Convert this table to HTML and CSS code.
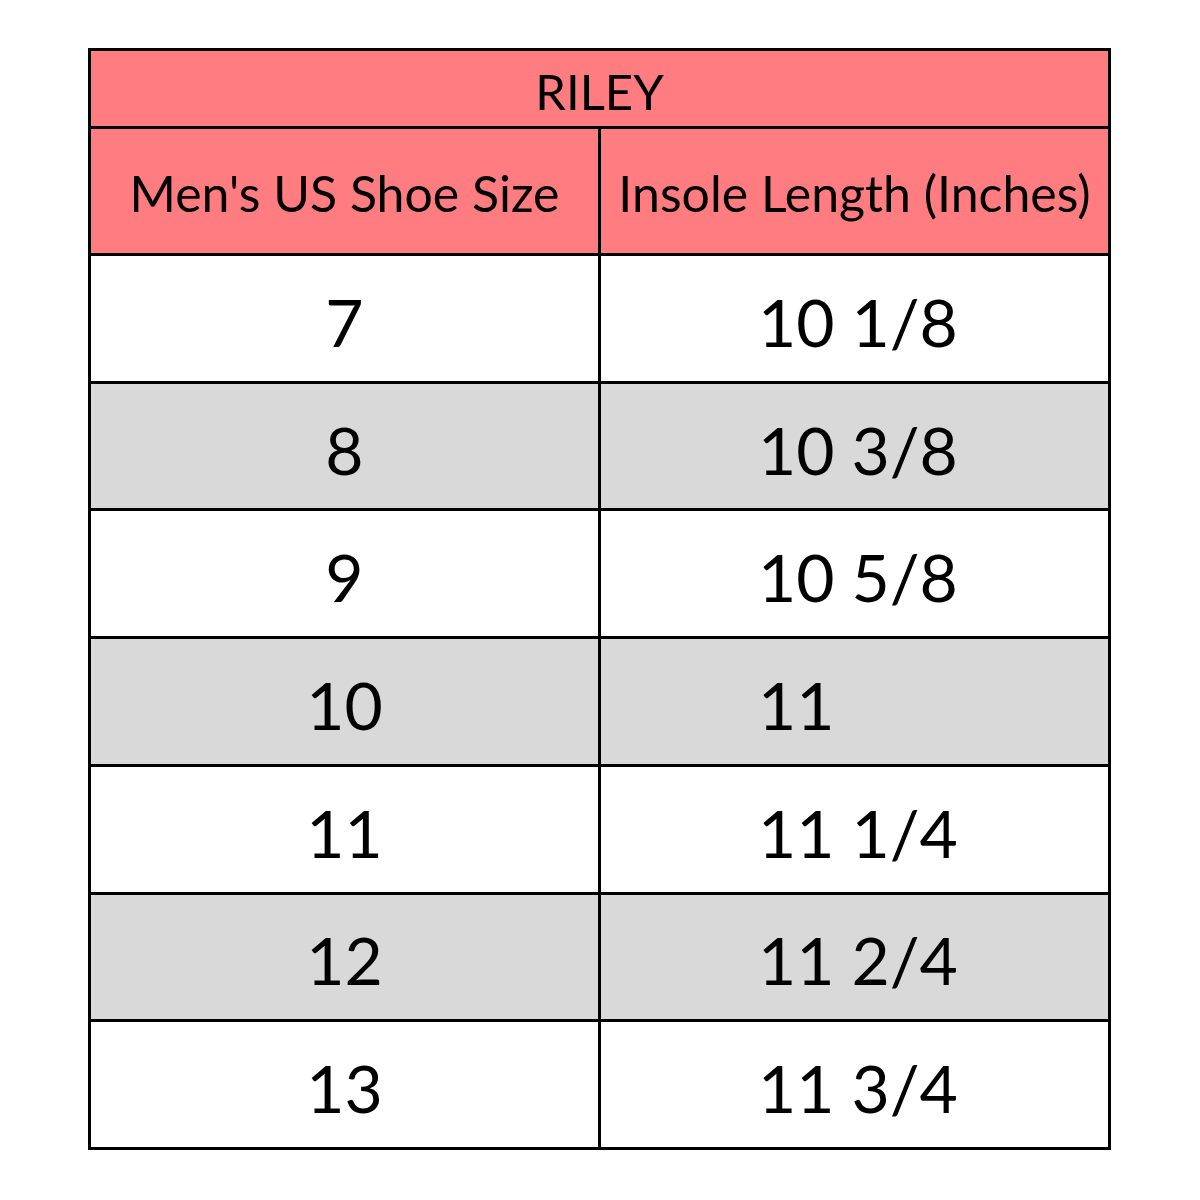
FILE: index.html
```html
<!DOCTYPE html>
<html>
<head>
<meta charset="utf-8">
<link rel="stylesheet" href="styles.css">
</head>
<body>
<div class="chart">
  <div class="cell title">RILEY</div>
  <div class="cell head">Men's US Shoe Size</div>
  <div class="cell head">Insole Length (Inches)</div>
  <div class="cell size">7</div><div class="cell len">10 1/8</div>
  <div class="cell size alt">8</div><div class="cell len alt">10 3/8</div>
  <div class="cell size">9</div><div class="cell len">10 5/8</div>
  <div class="cell size alt">10</div><div class="cell len alt">11</div>
  <div class="cell size">11</div><div class="cell len">11 1/4</div>
  <div class="cell size alt">12</div><div class="cell len alt">11 2/4</div>
  <div class="cell size">13</div><div class="cell len">11 3/4</div>
</div>
</body>
</html>
```
FILE: styles.css
```css
html, body {
  margin: 0;
  padding: 0;
  background: #ffffff;
}
body {
  font-family: Lato, "Open Sans", sans-serif;
  color: #000000;
}
.chart {
  margin: 48px 0 0 88px;
  width: 1023px;
  height: 1102px;
  box-sizing: border-box;
  padding: 3px;
  background: #000000;
  display: grid;
  grid-template-columns: 1fr 1fr;
  grid-template-rows: 75px 124px repeat(7, 1fr);
  gap: 3px;
}
.cell {
  display: flex;
  align-items: center;
  background: #ffffff;
}
.title {
  grid-column: 1 / 3;
  background: #ff7c80;
  justify-content: center;
  font-size: 49px;
  padding-top: 4px;
}
.head {
  background: #ff7c80;
  justify-content: center;
  font-size: 50px;
  padding-top: 3px;
}
.size {
  justify-content: center;
  font-size: 66px;
  padding-top: 6px;
}
.len {
  justify-content: flex-start;
  padding-left: 157px;
  font-size: 66px;
  padding-top: 6px;
}
.alt {
  background: #d9d9d9;
}
```
